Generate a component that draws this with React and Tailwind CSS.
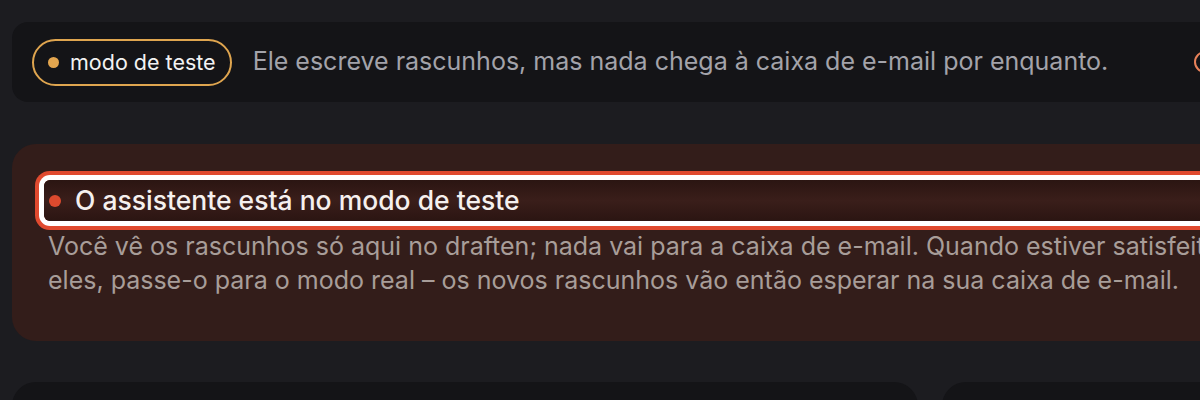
const font = { fontFamily: 'Inter, "Noto Sans", sans-serif' };

const TestModeBar = () => (
  <div className="flex items-center h-[80px] rounded-2xl bg-[#141417] pl-5">
    <span className="flex items-center gap-[11px] h-[47px] px-[14px] rounded-full border-2 border-[#dfa54f] text-[21.5px] text-[#f2f2f2] whitespace-nowrap">
      <span className="w-[11px] h-[11px] rounded-full bg-[#e3a64f]" />
      modo de teste
    </span>
    <p className="ml-[21px] text-[25px] text-[#a3a3aa] whitespace-nowrap">
      Ele escreve rascunhos, mas nada chega à caixa de e-mail por enquanto.
    </p>
    <span className="ml-[86px] w-[22px] h-[22px] rounded-full border-2 border-[#e9825a] shrink-0" />
  </div>
);

const TestModeNotice = () => (
  <div className="mt-[42px] rounded-3xl bg-[#331d1a] pl-9 pr-6 pt-[36px] pb-[44px] w-[1380px]">
    <div className="flex items-center gap-[14px] h-[41px] -ml-1 pl-[5px] rounded-md bg-gradient-to-b from-[#2b1512] via-[#3a1e1a] to-[#2b1512] shadow-[0_0_0_5px_#ffffff,0_0_0_9px_#e04a2f]">
      <span className="w-[12px] h-[12px] rounded-full bg-[#dc4a2e]" />
      <h2 className="text-[26.5px] font-medium text-[#f5f0ee]">O assistente está no modo de teste</h2>
    </div>
    <p className="mt-[8px] w-[1270px] text-[25px] leading-[34px] text-[#a89d99]">
      Você vê os rascunhos só aqui no draften; nada vai para a caixa de e-mail. Quando estiver satisfeito com
      eles, passe-o para o modo real – os novos rascunhos vão então esperar na sua caixa de e-mail.
    </p>
  </div>
);

export default function App() {
  return (
    <div className="h-[400px] w-full overflow-hidden bg-[#1c1c20]" style={font}>
      <div className="w-[1400px] pl-3 pt-[22px]">
        <TestModeBar />
        <TestModeNotice />
        <div className="mt-[41px] grid grid-cols-[906px_1fr] gap-6">
          <div className="h-[200px] rounded-3xl bg-[#141417]" />
          <div className="h-[200px] rounded-3xl bg-[#141417]" />
        </div>
      </div>
    </div>
  );
}
